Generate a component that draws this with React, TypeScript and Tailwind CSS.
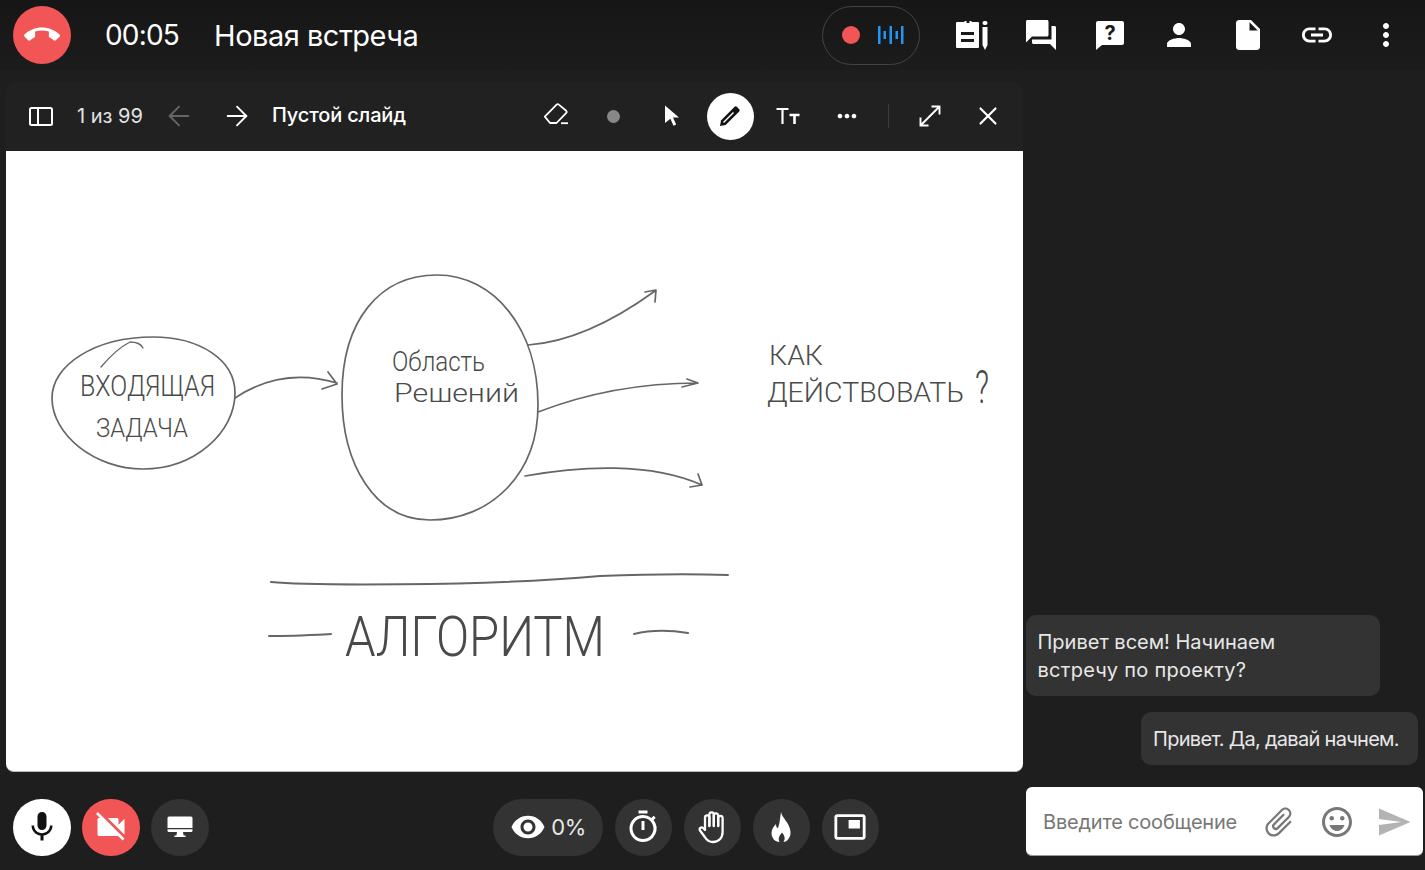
import React from "react";
import {
  MdCallEnd, MdForum, MdPerson, MdInsertDriveFile, MdLink, MdMoreVert,
  MdMic, MdVideocamOff, MdVisibility, MdOutlineTimer,
  MdPictureInPicture, MdAttachFile, MdOutlineEmojiEmotions, MdSend,
  MdMoreHoriz,
} from "react-icons/md";
import { ArrowLeft, ArrowRight, X } from "lucide-react";

function NotesIcon() {
  return (
    <svg width="34" height="30" viewBox="-1 0 34 30" fill="none">
      <path d="M0 3a1 1 0 0 1 1-1h7.5V1h7v1H22a1 1 0 0 1 1 1v24a1 1 0 0 1-1 1H1a1 1 0 0 1-1-1z" fill="#fff" />
      <rect x="10.5" y="0" width="3" height="3" fill="#1a1a1a" />
      <rect x="5" y="12" width="13" height="3" fill="#1a1a1a" />
      <rect x="5" y="19" width="13" height="3" fill="#1a1a1a" />
      <rect x="26.5" y="1" width="5" height="4" rx="2" fill="#fff" />
      <path d="M26.5 7h5v18l-2.5 5-2.5-5z" fill="#fff" />
    </svg>
  );
}

function HelpIcon() {
  return (
    <svg width="30" height="30" viewBox="0 0 30 30">
      <path d="M1 3a2 2 0 0 1 2-2h24a2 2 0 0 1 2 2v20a2 2 0 0 1-2 2H7l-6 5z" fill="#fff" />
      <text x="15" y="20" fontSize="20" fontWeight="700" textAnchor="middle" fill="#1a1a1a" className="font-['Inter',sans-serif]">?</text>
    </svg>
  );
}

function EraserIcon() {
  return (
    <svg width="28" height="28" viewBox="0 0 28 28" fill="none" stroke="#fff" strokeWidth="1.8" strokeLinejoin="round">
      <path d="M2.8 15.6 14.6 3.6a1.6 1.6 0 0 1 2.2 0l7.4 6.2a1.4 1.4 0 0 1 .1 2L14.5 22H8z" />
      <path d="M19 22.2h7" />
    </svg>
  );
}

function CursorIcon() {
  return (
    <svg width="22" height="26" viewBox="0 0 22 26">
      <path d="M4 2.5 18 14.5h-6l3.2 7-2.7 1.3-3.1-7.1L4 20z" fill="#fff" />
    </svg>
  );
}

function PencilIcon() {
  return (
    <svg width="24" height="24" viewBox="0 0 24 24">
      <path d="M2 22l1-5.6L16.6 2.8a1.6 1.6 0 0 1 2.2 0l2.4 2.4a1.6 1.6 0 0 1 0 2.2L7.6 21z" fill="#111" />
      <path d="M5.5 18.5 15.5 8.5" stroke="#fff" strokeWidth="1.5" />
    </svg>
  );
}

function TextSizeIcon() {
  return (
    <svg width="24" height="18" viewBox="0 0 24 18" fill="none" stroke="#fff">
      <path d="M0.5 2H12.5M6.5 2V17" strokeWidth="2.2" />
      <path d="M13.5 8H23.5M18.5 8V17" strokeWidth="2.6" />
    </svg>
  );
}

function SidebarIcon() {
  return (
    <svg width="24" height="19" viewBox="0 0 24 19" fill="none" stroke="#fff" strokeWidth="2">
      <rect x="1" y="1" width="22" height="17" rx="1.5" />
      <path d="M9 1V18" />
    </svg>
  );
}

function ExpandIcon() {
  return (
    <svg width="26" height="26" viewBox="0 0 26 26" fill="none" stroke="#fff" strokeWidth="1.9">
      <path d="M4 22 22 4M14.5 3.5H22.5V11.5M3.5 14.5V22.5H11.5" />
    </svg>
  );
}

function DesktopIcon() {
  return (
    <svg width="26" height="22" viewBox="0 0 26 22" fill="#fff">
      <path d="M0.5 2a1.5 1.5 0 0 1 1.5-1.5h22a1.5 1.5 0 0 1 1.5 1.5v10H0.5z" />
      <path d="M0.5 13.2h25v1.3a1.5 1.5 0 0 1-1.5 1.5H2a1.5 1.5 0 0 1-1.5-1.5z" />
      <path d="M10 16h6l.6 3.4h2v1.6H7.4v-1.6h2z" />
    </svg>
  );
}

function HandIcon() {
  return (
    <svg width="28" height="33" viewBox="0 0 28 33" fill="none" stroke="#fff" strokeWidth="2.3" strokeLinecap="round" strokeLinejoin="round">
      <path d="M7 18V6.5a2.2 2.2 0 0 1 4.4 0V15" />
      <path d="M11.4 15V3.5a2.2 2.2 0 0 1 4.4 0V15" />
      <path d="M15.8 15V4.5a2.2 2.2 0 0 1 4.4 0V15" />
      <path d="M20.2 15V7a2.2 2.2 0 0 1 4.4 0V21c0 6-4 10-9.6 10-4.2 0-6.4-2-8.2-5L2 19.5c-1.2-2 1-4 3-2.5l2 2" />
    </svg>
  );
}

function FlameIcon() {
  return (
    <svg width="20" height="30" viewBox="0 0 20 30" fill="#fff">
      <path d="M10 0C11 6 19 11 19.5 20C20 25 16 30 12.5 30C14.5 27 14 24 11 20.5C9 23 6.5 26 8.5 30C4 30 .5 26 .5 21C.5 17 3 14 5 12C5 15 6 16 7 16C9 11 9 5 10 0Z" />
    </svg>
  );
}

function Bars() {
  return (
    <svg width="26" height="20" viewBox="0 0 26 20" fill="#2196f3" className="ml-[17.5px]">
      <rect x="0" y="1" width="2.5" height="18" />
      <rect x="5.5" y="6" width="2.5" height="8" />
      <rect x="11.5" y="1" width="2.5" height="18" />
      <rect x="17.5" y="6" width="2.5" height="8" />
      <rect x="23" y="1" width="2.5" height="18" />
    </svg>
  );
}

function Sketch() {
  return (
    <svg viewBox="6 151 1017 620" className="block h-full w-full" fill="none" stroke="#666" strokeWidth="1.7" strokeLinecap="round" strokeLinejoin="round">
      <g>
        <path d="M52 398C52 365 95 337 153 337C200 337 235 360 235 393C235 432 195 469 143 469C95 469 52 435 52 398Z" />
        <path d="M101 367C112 354 122 346 130 342C136 342 141 344 143 348" strokeWidth="1.3" />
        <path d="M235 398C265 378 300 372 337 383M328 372 337 384 322 389" />
        <path d="M342 395C342 320 380 275 437 275C495 275 538 330 538 405C538 475 490 520 430 520C375 520 342 465 342 395Z" />
        <path d="M528 345C570 342 615 320 655 291M645 292 656 290 655 302" />
        <path d="M538 412C590 392 640 383 698 383M687 379 698 383 682 387" />
        <path d="M525 476C580 466 650 462 702 485M698 474 702 485 690 487" />
        <path d="M271 582C300 585 480 587 600 576C650 574 700 574 728 575" strokeWidth="2" />
        <path d="M269 636C290 636 310 635 331 634" strokeWidth="2" />
        <path d="M634 634C650 630 670 630 688 633" strokeWidth="2" />
      </g>
      <g className="font-['Roboto',sans-serif] font-light" fill="#4a4a4a" stroke="none">
        <text x="80" y="396" fontSize="30" textLength="135" lengthAdjust="spacingAndGlyphs">ВХОДЯЩАЯ</text>
        <text x="96" y="437" fontSize="26" textLength="92" lengthAdjust="spacingAndGlyphs">ЗАДАЧА</text>
        <text x="392" y="371" fontSize="28" textLength="93" lengthAdjust="spacingAndGlyphs">Область</text>
        <text x="394" y="402" fontSize="26" textLength="125" lengthAdjust="spacingAndGlyphs">Решений</text>
        <text x="769" y="365" fontSize="28" textLength="54" lengthAdjust="spacingAndGlyphs">КАК</text>
        <text x="767" y="402" fontSize="28" textLength="197" lengthAdjust="spacingAndGlyphs">ДЕЙСТВОВАТЬ</text>
        <text x="975" y="403" fontSize="46" textLength="14" lengthAdjust="spacingAndGlyphs">?</text>
        <text x="345" y="656" fontSize="56" textLength="260" lengthAdjust="spacingAndGlyphs">АЛГОРИТМ</text>
      </g>
    </svg>
  );
}

const HeaderSlot = ({ children }: { children: React.ReactNode }) => (
  <div className="flex w-[69px] items-center justify-center text-white">{children}</div>
);

const RoundBtn = ({ children, cls }: { children: React.ReactNode; cls: string }) => (
  <div className={"flex h-[57.5px] w-[57.5px] shrink-0 items-center justify-center rounded-full " + cls}>{children}</div>
);

export default function App() {
  return (
    <div className="flex h-[870px] w-full flex-col overflow-hidden bg-[#1e1e1e] font-['Inter',sans-serif] text-white">
      <header className="flex h-[70px] shrink-0 items-center bg-gradient-to-b from-[#161616] to-[#1c1c1c] pl-[13px] pr-[5px]">
        <div className="flex h-[57.5px] w-[57.5px] items-center justify-center rounded-full bg-[#f25555]">
          <MdCallEnd size={36} color="#fff" />
        </div>
        <span className="ml-[34.5px] text-[28px] leading-none tracking-[-0.8px]">00:05</span>
        <span className="ml-[35px] text-[29px] leading-none tracking-[-0.5px]">Новая встреча</span>
        <div className="ml-auto mr-[17px] flex h-[59px] w-[98px] items-center rounded-full border border-[#444] pl-[19px]">
          <div className="h-[18px] w-[18px] rounded-full bg-[#f25555]" />
          <Bars />
        </div>
        <HeaderSlot><NotesIcon /></HeaderSlot>
        <HeaderSlot><MdForum size={36} /></HeaderSlot>
        <HeaderSlot><HelpIcon /></HeaderSlot>
        <HeaderSlot><MdPerson size={36} /></HeaderSlot>
        <HeaderSlot><MdInsertDriveFile size={36} /></HeaderSlot>
        <HeaderSlot><MdLink size={36} /></HeaderSlot>
        <HeaderSlot><MdMoreVert size={36} /></HeaderSlot>
      </header>

      <div className="flex min-h-0 flex-1">
        <div className="flex w-[1023px] shrink-0 flex-col pl-[6px]">
          <div className="mt-[12px] flex h-[69px] shrink-0 items-center rounded-t-lg bg-[#212121] pb-[1px] pl-[23px]">
            <SidebarIcon />
            <span className="mb-[1px] ml-[24px] text-[20px] text-[#e4e4e4]">1 из 99</span>
            <ArrowLeft size={32} strokeWidth={1.4} className="ml-[20px] text-[#666]" />
            <ArrowRight size={32} strokeWidth={1.4} className="ml-[26px]" />
            <span className="mb-[3px] ml-[19px] text-[20px] font-medium tracking-[-0.15px]">Пустой слайд</span>
            <div className="mb-[2px] ml-[136px] flex w-[28px] justify-center"><EraserIcon /></div>
            <div className="ml-[37px] h-[13px] w-[13px] rounded-full bg-[#888]" />
            <div className="ml-[41px] flex w-[22px] justify-center"><CursorIcon /></div>
            <div className="ml-[24px] flex h-[47px] w-[47px] items-center justify-center rounded-full bg-white">
              <PencilIcon />
            </div>
            <div className="ml-[20px] flex w-[28px] justify-center"><TextSizeIcon /></div>
            <div className="ml-[29px] flex w-[32px] justify-center"><MdMoreHoriz size={28} /></div>
            <div className="ml-[25px] h-[24px] w-px bg-[#3c3c3c]" />
            <div className="ml-[28px] flex w-[26px] justify-center"><ExpandIcon /></div>
            <X size={30} strokeWidth={1.7} className="ml-[30px]" />
          </div>
          <div className="h-[621px] shrink-0 overflow-hidden rounded-b-lg border-b border-[#bbb] bg-white">
            <Sketch />
          </div>
          <div className="flex flex-1 items-start pl-[7px] pt-[26.5px]">
            <RoundBtn cls="bg-white"><MdMic size={36} color="#111" /></RoundBtn>
            <RoundBtn cls="ml-[11.5px] bg-[#f25555]"><MdVideocamOff size={36} color="#fff" /></RoundBtn>
            <RoundBtn cls="ml-[11.5px] bg-[#333]"><DesktopIcon /></RoundBtn>
            <div className="ml-[284.5px] flex h-[57.5px] w-[110px] items-center justify-center rounded-full bg-[#333]">
              <MdVisibility size={36} />
              <span className="ml-[5px] text-[22px] tracking-[-0.5px] text-[#e8e8e8]">0%</span>
            </div>
            <RoundBtn cls="ml-[11.5px] bg-[#333]"><MdOutlineTimer size={36} /></RoundBtn>
            <RoundBtn cls="ml-[11.5px] bg-[#333]"><HandIcon /></RoundBtn>
            <RoundBtn cls="ml-[11.5px] bg-[#333]"><FlameIcon /></RoundBtn>
            <RoundBtn cls="ml-[11.5px] bg-[#333]"><MdPictureInPicture size={34} /></RoundBtn>
          </div>
        </div>

        <div className="flex min-w-0 flex-1 flex-col items-start justify-end pb-[14px] pl-[3px] pr-[2px]">
          <div className="w-[354px] rounded-[10px] bg-[#333] px-[11.5px] py-[12.5px] text-[20px] leading-[28px] text-[#e8e8e8]">
            <div>Привет всем! Начинаем</div>
            <div className="tracking-[0.27px]">встречу по проекту?</div>
          </div>
          <div className="ml-[115px] mt-[16px] flex h-[53px] w-[277px] items-center whitespace-nowrap rounded-[10px] bg-[#333] px-[12px] text-[20px] tracking-[-0.7px] text-[#e8e8e8]">
            Привет. Да, давай начнем.
          </div>
          <div className="mt-[22px] flex h-[69px] w-[397px] items-center rounded-md border-b border-[#999] bg-white pl-[17px] pt-[1.5px]">
            <span className="text-[20px] tracking-[-0.2px] text-[#777]">Введите сообщение</span>
            <MdAttachFile size={36} color="#777" className="ml-[24px] rotate-45" />
            <MdOutlineEmojiEmotions size={36} color="#777" className="ml-[22px]" />
            <MdSend size={36} color="#b3b3b3" className="ml-[21px]" />
          </div>
        </div>
      </div>
    </div>
  );
}
